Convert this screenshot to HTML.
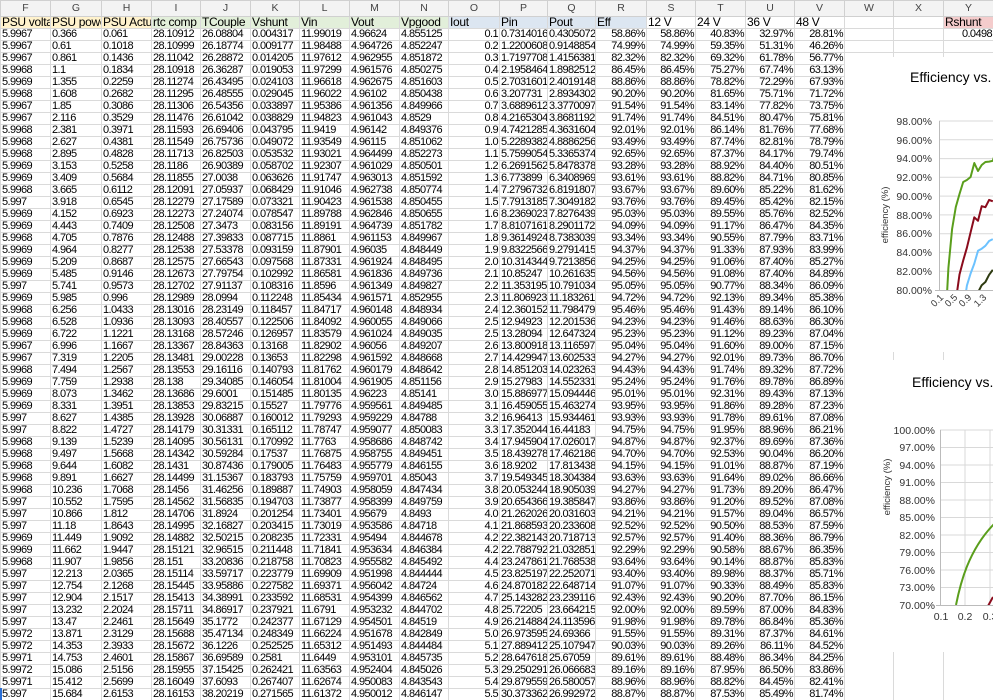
<!DOCTYPE html>
<html><head><meta charset="utf-8">
<style>
html,body{margin:0;padding:0;background:#fff;width:993px;height:700px;overflow:hidden;position:relative}
table{border-collapse:collapse;table-layout:fixed;width:993px;font:11px "Liberation Sans",Arial,sans-serif;color:#000}
td{height:11px;padding:0 1px;border:1px solid #dadada;white-space:nowrap;overflow:hidden;line-height:11px;letter-spacing:-0.6px}
tr.let td{height:15px;background:#f3f3f3;color:#444;text-align:center;border-color:#d0d0d0;font-size:10.5px;letter-spacing:0}
tr.hd td{font-size:12px;letter-spacing:-0.3px}
tbody tr td:nth-child(10),tbody tr td:nth-child(n+13){text-align:right}
tr.let td{text-align:center!important}
tr.hd td{text-align:left!important}
.y{background:#fff2cc}.g{background:#e2efda}.b{background:#dce6f1}.p{background:#f4cccc}
.ov{position:absolute;background:#fff}
svg text{font-family:"Liberation Sans",Arial,sans-serif}
</style></head><body>
<table>
<colgroup><col style="width:50px"><col style="width:51px"><col style="width:50px"><col style="width:49px"><col style="width:50px"><col style="width:49px"><col style="width:50px"><col style="width:50px"><col style="width:49px"><col style="width:51px"><col style="width:48px"><col style="width:48px"><col style="width:51px"><col style="width:49px"><col style="width:50px"><col style="width:49px"><col style="width:50px"><col style="width:49px"><col style="width:50px"><col style="width:50px"></colgroup>
<tbody>
<tr class="let"><td>F</td><td>G</td><td>H</td><td>I</td><td>J</td><td>K</td><td>L</td><td>M</td><td>N</td><td>O</td><td>P</td><td>Q</td><td>R</td><td>S</td><td>T</td><td>U</td><td>V</td><td>W</td><td>X</td><td>Y</td></tr>
<tr class="hd"><td class="y">PSU voltage</td><td class="y">PSU power</td><td class="y">PSU Actual</td><td class="g">rtc comp</td><td class="g">TCouple</td><td class="g">Vshunt</td><td class="g">Vin</td><td class="g">Vout</td><td class="g">Vpgood</td><td class="b">Iout</td><td class="b">Pin</td><td class="b">Pout</td><td class="b">Eff</td><td>12 V</td><td>24 V</td><td>36 V</td><td>48 V</td><td></td><td></td><td class="p">Rshunt</td></tr>
<tr><td>5.9967</td><td>0.366</td><td>0.061</td><td>28.10912</td><td>26.08804</td><td>0.004317</td><td>11.99019</td><td>4.96624</td><td>4.855125</td><td>0.1</td><td>0.7314016</td><td>0.4305072</td><td>58.86%</td><td>58.86%</td><td>40.83%</td><td>32.97%</td><td>28.81%</td><td></td><td></td><td style="text-align:right">0.0498</td></tr>
<tr><td>5.9967</td><td>0.61</td><td>0.1018</td><td>28.10999</td><td>26.18774</td><td>0.009177</td><td>11.98488</td><td>4.964726</td><td>4.852247</td><td>0.2</td><td>1.2200608</td><td>0.9148854</td><td>74.99%</td><td>74.99%</td><td>59.35%</td><td>51.31%</td><td>46.26%</td><td></td><td></td><td></td></tr>
<tr><td>5.9967</td><td>0.861</td><td>0.1436</td><td>28.11042</td><td>26.28872</td><td>0.014205</td><td>11.97612</td><td>4.962955</td><td>4.851872</td><td>0.3</td><td>1.7197708</td><td>1.4156381</td><td>82.32%</td><td>82.32%</td><td>69.32%</td><td>61.78%</td><td>56.77%</td><td></td><td></td><td></td></tr>
<tr><td>5.9968</td><td>1.1</td><td>0.1834</td><td>28.10918</td><td>26.36287</td><td>0.019053</td><td>11.97299</td><td>4.961576</td><td>4.850275</td><td>0.4</td><td>2.1958464</td><td>1.8982512</td><td>86.45%</td><td>86.45%</td><td>75.27%</td><td>67.74%</td><td>63.13%</td><td></td><td></td><td></td></tr>
<tr><td>5.9969</td><td>1.355</td><td>0.2259</td><td>28.11274</td><td>26.43495</td><td>0.024103</td><td>11.96618</td><td>4.962675</td><td>4.851603</td><td>0.5</td><td>2.7031601</td><td>2.4019148</td><td>88.86%</td><td>88.86%</td><td>78.82%</td><td>72.29%</td><td>67.93%</td><td></td><td></td><td></td></tr>
<tr><td>5.9968</td><td>1.608</td><td>0.2682</td><td>28.11295</td><td>26.48555</td><td>0.029045</td><td>11.96022</td><td>4.96102</td><td>4.850438</td><td>0.6</td><td>3.207731</td><td>2.8934302</td><td>90.20%</td><td>90.20%</td><td>81.65%</td><td>75.71%</td><td>71.72%</td><td></td><td></td><td></td></tr>
<tr><td>5.9967</td><td>1.85</td><td>0.3086</td><td>28.11306</td><td>26.54356</td><td>0.033897</td><td>11.95386</td><td>4.961356</td><td>4.849966</td><td>0.7</td><td>3.6889612</td><td>3.3770097</td><td>91.54%</td><td>91.54%</td><td>83.14%</td><td>77.82%</td><td>73.75%</td><td></td><td></td><td></td></tr>
<tr><td>5.9967</td><td>2.116</td><td>0.3529</td><td>28.11476</td><td>26.61042</td><td>0.038829</td><td>11.94823</td><td>4.961043</td><td>4.8529</td><td>0.8</td><td>4.2165304</td><td>3.8681192</td><td>91.74%</td><td>91.74%</td><td>84.51%</td><td>80.47%</td><td>75.81%</td><td></td><td></td><td></td></tr>
<tr><td>5.9968</td><td>2.381</td><td>0.3971</td><td>28.11593</td><td>26.69406</td><td>0.043795</td><td>11.9419</td><td>4.96142</td><td>4.849376</td><td>0.9</td><td>4.7421285</td><td>4.3631604</td><td>92.01%</td><td>92.01%</td><td>86.14%</td><td>81.76%</td><td>77.68%</td><td></td><td></td><td></td></tr>
<tr><td>5.9968</td><td>2.627</td><td>0.4381</td><td>28.11549</td><td>26.75736</td><td>0.049072</td><td>11.93549</td><td>4.96115</td><td>4.851062</td><td>1.0</td><td>5.2289382</td><td>4.8886256</td><td>93.49%</td><td>93.49%</td><td>87.74%</td><td>82.81%</td><td>78.79%</td><td></td><td></td><td></td></tr>
<tr><td>5.9968</td><td>2.895</td><td>0.4828</td><td>28.11713</td><td>26.82503</td><td>0.053532</td><td>11.93021</td><td>4.964499</td><td>4.852273</td><td>1.1</td><td>5.7599054</td><td>5.3365374</td><td>92.65%</td><td>92.65%</td><td>87.37%</td><td>84.17%</td><td>79.74%</td><td></td><td></td><td></td></tr>
<tr><td>5.9969</td><td>3.153</td><td>0.5258</td><td>28.1186</td><td>26.90389</td><td>0.058702</td><td>11.92307</td><td>4.961029</td><td>4.850501</td><td>1.2</td><td>6.2691562</td><td>5.8478378</td><td>93.28%</td><td>93.28%</td><td>88.92%</td><td>84.40%</td><td>80.51%</td><td></td><td></td><td></td></tr>
<tr><td>5.9969</td><td>3.409</td><td>0.5684</td><td>28.11855</td><td>27.0038</td><td>0.063626</td><td>11.91747</td><td>4.963013</td><td>4.851592</td><td>1.3</td><td>6.773899</td><td>6.3408969</td><td>93.61%</td><td>93.61%</td><td>88.82%</td><td>84.71%</td><td>80.85%</td><td></td><td></td><td></td></tr>
<tr><td>5.9968</td><td>3.665</td><td>0.6112</td><td>28.12091</td><td>27.05937</td><td>0.068429</td><td>11.91046</td><td>4.962738</td><td>4.850774</td><td>1.4</td><td>7.2796732</td><td>6.8191807</td><td>93.67%</td><td>93.67%</td><td>89.60%</td><td>85.22%</td><td>81.62%</td><td></td><td></td><td></td></tr>
<tr><td>5.997</td><td>3.918</td><td>0.6545</td><td>28.12279</td><td>27.17589</td><td>0.073321</td><td>11.90423</td><td>4.961538</td><td>4.850455</td><td>1.5</td><td>7.7913185</td><td>7.3049182</td><td>93.76%</td><td>93.76%</td><td>89.45%</td><td>85.42%</td><td>82.15%</td><td></td><td></td><td></td></tr>
<tr><td>5.9969</td><td>4.152</td><td>0.6923</td><td>28.12273</td><td>27.24074</td><td>0.078547</td><td>11.89788</td><td>4.962846</td><td>4.850655</td><td>1.6</td><td>8.2369023</td><td>7.8276439</td><td>95.03%</td><td>95.03%</td><td>89.55%</td><td>85.76%</td><td>82.52%</td><td></td><td></td><td></td></tr>
<tr><td>5.9969</td><td>4.443</td><td>0.7409</td><td>28.12508</td><td>27.3473</td><td>0.083156</td><td>11.89191</td><td>4.964739</td><td>4.851782</td><td>1.7</td><td>8.8107161</td><td>8.2901172</td><td>94.09%</td><td>94.09%</td><td>91.17%</td><td>86.47%</td><td>84.35%</td><td></td><td></td><td></td></tr>
<tr><td>5.9968</td><td>4.705</td><td>0.7876</td><td>28.12488</td><td>27.39833</td><td>0.087715</td><td>11.8861</td><td>4.961153</td><td>4.849967</td><td>1.8</td><td>9.3614924</td><td>8.7383039</td><td>93.34%</td><td>93.34%</td><td>90.55%</td><td>87.79%</td><td>83.71%</td><td></td><td></td><td></td></tr>
<tr><td>5.9969</td><td>4.964</td><td>0.8277</td><td>28.12538</td><td>27.53378</td><td>0.093159</td><td>11.87901</td><td>4.96035</td><td>4.848449</td><td>1.9</td><td>9.8322566</td><td>9.2791415</td><td>94.37%</td><td>94.37%</td><td>91.33%</td><td>87.93%</td><td>83.99%</td><td></td><td></td><td></td></tr>
<tr><td>5.9969</td><td>5.209</td><td>0.8687</td><td>28.12575</td><td>27.66543</td><td>0.097568</td><td>11.87331</td><td>4.961924</td><td>4.848495</td><td>2.0</td><td>10.314344</td><td>9.7213856</td><td>94.25%</td><td>94.25%</td><td>91.06%</td><td>87.40%</td><td>85.27%</td><td></td><td></td><td></td></tr>
<tr><td>5.9969</td><td>5.485</td><td>0.9146</td><td>28.12673</td><td>27.79754</td><td>0.102992</td><td>11.86581</td><td>4.961836</td><td>4.849736</td><td>2.1</td><td>10.85247</td><td>10.261635</td><td>94.56%</td><td>94.56%</td><td>91.08%</td><td>87.40%</td><td>84.89%</td><td></td><td></td><td></td></tr>
<tr><td>5.997</td><td>5.741</td><td>0.9573</td><td>28.12702</td><td>27.91137</td><td>0.108316</td><td>11.8596</td><td>4.961349</td><td>4.849827</td><td>2.2</td><td>11.353195</td><td>10.791034</td><td>95.05%</td><td>95.05%</td><td>90.77%</td><td>88.34%</td><td>86.09%</td><td></td><td></td><td></td></tr>
<tr><td>5.9969</td><td>5.985</td><td>0.996</td><td>28.12989</td><td>28.0994</td><td>0.112248</td><td>11.85434</td><td>4.961571</td><td>4.852955</td><td>2.3</td><td>11.806923</td><td>11.183261</td><td>94.72%</td><td>94.72%</td><td>92.13%</td><td>89.34%</td><td>85.38%</td><td></td><td></td><td></td></tr>
<tr><td>5.9968</td><td>6.256</td><td>1.0433</td><td>28.13016</td><td>28.23149</td><td>0.118457</td><td>11.84717</td><td>4.960148</td><td>4.848934</td><td>2.4</td><td>12.360152</td><td>11.798479</td><td>95.46%</td><td>95.46%</td><td>91.43%</td><td>89.14%</td><td>86.10%</td><td></td><td></td><td></td></tr>
<tr><td>5.9968</td><td>6.528</td><td>1.0936</td><td>28.13093</td><td>28.40557</td><td>0.122506</td><td>11.84092</td><td>4.960055</td><td>4.849066</td><td>2.5</td><td>12.94923</td><td>12.201536</td><td>94.23%</td><td>94.23%</td><td>91.46%</td><td>88.63%</td><td>86.30%</td><td></td><td></td><td></td></tr>
<tr><td>5.9969</td><td>6.722</td><td>1.1221</td><td>28.13168</td><td>28.57246</td><td>0.126957</td><td>11.83579</td><td>4.961024</td><td>4.849035</td><td>2.5</td><td>13.28094</td><td>12.647324</td><td>95.23%</td><td>95.23%</td><td>91.12%</td><td>89.23%</td><td>87.04%</td><td></td><td></td><td></td></tr>
<tr><td>5.9967</td><td>6.996</td><td>1.1667</td><td>28.13367</td><td>28.84363</td><td>0.13168</td><td>11.82902</td><td>4.96056</td><td>4.849207</td><td>2.6</td><td>13.800918</td><td>13.116597</td><td>95.04%</td><td>95.04%</td><td>91.60%</td><td>89.00%</td><td>87.15%</td><td></td><td></td><td></td></tr>
<tr><td>5.9967</td><td>7.319</td><td>1.2205</td><td>28.13481</td><td>29.00228</td><td>0.13653</td><td>11.82298</td><td>4.961592</td><td>4.848668</td><td>2.7</td><td>14.429947</td><td>13.602533</td><td>94.27%</td><td>94.27%</td><td>92.01%</td><td>89.73%</td><td>86.70%</td><td></td><td></td><td></td></tr>
<tr><td>5.9968</td><td>7.494</td><td>1.2567</td><td>28.13553</td><td>29.16116</td><td>0.140793</td><td>11.81762</td><td>4.960179</td><td>4.848642</td><td>2.8</td><td>14.851203</td><td>14.023263</td><td>94.43%</td><td>94.43%</td><td>91.74%</td><td>89.32%</td><td>87.72%</td><td></td><td></td><td></td></tr>
<tr><td>5.9969</td><td>7.759</td><td>1.2938</td><td>28.138</td><td>29.34085</td><td>0.146054</td><td>11.81004</td><td>4.961905</td><td>4.851156</td><td>2.9</td><td>15.27983</td><td>14.552331</td><td>95.24%</td><td>95.24%</td><td>91.76%</td><td>89.78%</td><td>86.89%</td><td></td><td></td><td></td></tr>
<tr><td>5.9969</td><td>8.073</td><td>1.3462</td><td>28.13686</td><td>29.6001</td><td>0.151485</td><td>11.80135</td><td>4.96223</td><td>4.85141</td><td>3.0</td><td>15.886977</td><td>15.094446</td><td>95.01%</td><td>95.01%</td><td>92.31%</td><td>89.43%</td><td>87.13%</td><td></td><td></td><td></td></tr>
<tr><td>5.9969</td><td>8.331</td><td>1.3951</td><td>28.13853</td><td>29.83215</td><td>0.15527</td><td>11.79776</td><td>4.959561</td><td>4.849485</td><td>3.1</td><td>16.459055</td><td>15.463274</td><td>93.95%</td><td>93.95%</td><td>91.86%</td><td>89.28%</td><td>87.23%</td><td></td><td></td><td></td></tr>
<tr><td>5.997</td><td>8.627</td><td>1.4385</td><td>28.13928</td><td>30.06887</td><td>0.160012</td><td>11.79293</td><td>4.959229</td><td>4.84788</td><td>3.2</td><td>16.96413</td><td>15.934461</td><td>93.93%</td><td>93.93%</td><td>91.78%</td><td>89.61%</td><td>87.08%</td><td></td><td></td><td></td></tr>
<tr><td>5.997</td><td>8.822</td><td>1.4727</td><td>28.14179</td><td>30.31331</td><td>0.165112</td><td>11.78747</td><td>4.959077</td><td>4.850083</td><td>3.3</td><td>17.352044</td><td>16.44183</td><td>94.75%</td><td>94.75%</td><td>91.95%</td><td>88.96%</td><td>86.21%</td><td></td><td></td><td></td></tr>
<tr><td>5.9968</td><td>9.139</td><td>1.5239</td><td>28.14095</td><td>30.56131</td><td>0.170992</td><td>11.7763</td><td>4.958686</td><td>4.848742</td><td>3.4</td><td>17.945904</td><td>17.026017</td><td>94.87%</td><td>94.87%</td><td>92.37%</td><td>89.69%</td><td>87.36%</td><td></td><td></td><td></td></tr>
<tr><td>5.9968</td><td>9.497</td><td>1.5668</td><td>28.14342</td><td>30.59284</td><td>0.17537</td><td>11.76875</td><td>4.958755</td><td>4.849451</td><td>3.5</td><td>18.439278</td><td>17.462186</td><td>94.70%</td><td>94.70%</td><td>92.53%</td><td>90.04%</td><td>86.20%</td><td></td><td></td><td></td></tr>
<tr><td>5.9968</td><td>9.644</td><td>1.6082</td><td>28.1431</td><td>30.87436</td><td>0.179005</td><td>11.76483</td><td>4.955779</td><td>4.846155</td><td>3.6</td><td>18.9202</td><td>17.813438</td><td>94.15%</td><td>94.15%</td><td>91.01%</td><td>88.87%</td><td>87.19%</td><td></td><td></td><td></td></tr>
<tr><td>5.9968</td><td>9.891</td><td>1.6627</td><td>28.14499</td><td>31.15367</td><td>0.183793</td><td>11.75759</td><td>4.959701</td><td>4.85043</td><td>3.7</td><td>19.549345</td><td>18.304384</td><td>93.63%</td><td>93.63%</td><td>91.64%</td><td>89.02%</td><td>86.66%</td><td></td><td></td><td></td></tr>
<tr><td>5.9968</td><td>10.236</td><td>1.7068</td><td>28.1456</td><td>31.46256</td><td>0.189887</td><td>11.74903</td><td>4.958059</td><td>4.847434</td><td>3.8</td><td>20.053244</td><td>18.905039</td><td>94.27%</td><td>94.27%</td><td>91.73%</td><td>89.20%</td><td>86.47%</td><td></td><td></td><td></td></tr>
<tr><td>5.997</td><td>10.552</td><td>1.7595</td><td>28.14562</td><td>31.56835</td><td>0.194703</td><td>11.73877</td><td>4.958399</td><td>4.849759</td><td>3.9</td><td>20.654366</td><td>19.385847</td><td>93.86%</td><td>93.86%</td><td>91.20%</td><td>89.52%</td><td>87.08%</td><td></td><td></td><td></td></tr>
<tr><td>5.997</td><td>10.866</td><td>1.812</td><td>28.14706</td><td>31.8924</td><td>0.201254</td><td>11.73401</td><td>4.95679</td><td>4.8493</td><td>4.0</td><td>21.262026</td><td>20.031603</td><td>94.21%</td><td>94.21%</td><td>91.57%</td><td>89.04%</td><td>86.57%</td><td></td><td></td><td></td></tr>
<tr><td>5.997</td><td>11.18</td><td>1.8643</td><td>28.14995</td><td>32.16827</td><td>0.203415</td><td>11.73019</td><td>4.953586</td><td>4.84718</td><td>4.1</td><td>21.868593</td><td>20.233608</td><td>92.52%</td><td>92.52%</td><td>90.50%</td><td>88.53%</td><td>87.59%</td><td></td><td></td><td></td></tr>
<tr><td>5.9969</td><td>11.449</td><td>1.9092</td><td>28.14882</td><td>32.50215</td><td>0.208235</td><td>11.72331</td><td>4.95494</td><td>4.844678</td><td>4.2</td><td>22.382143</td><td>20.718713</td><td>92.57%</td><td>92.57%</td><td>91.40%</td><td>88.36%</td><td>86.79%</td><td></td><td></td><td></td></tr>
<tr><td>5.9969</td><td>11.662</td><td>1.9447</td><td>28.15121</td><td>32.96515</td><td>0.211448</td><td>11.71841</td><td>4.953634</td><td>4.846384</td><td>4.2</td><td>22.788792</td><td>21.032851</td><td>92.29%</td><td>92.29%</td><td>90.58%</td><td>88.67%</td><td>86.35%</td><td></td><td></td><td></td></tr>
<tr><td>5.9968</td><td>11.907</td><td>1.9856</td><td>28.151</td><td>33.20836</td><td>0.218758</td><td>11.70823</td><td>4.955582</td><td>4.845492</td><td>4.4</td><td>23.247861</td><td>21.768538</td><td>93.64%</td><td>93.64%</td><td>90.14%</td><td>88.87%</td><td>85.83%</td><td></td><td></td><td></td></tr>
<tr><td>5.997</td><td>12.213</td><td>2.0365</td><td>28.15114</td><td>33.59717</td><td>0.223779</td><td>11.69909</td><td>4.951998</td><td>4.844444</td><td>4.5</td><td>23.825197</td><td>22.252071</td><td>93.40%</td><td>93.40%</td><td>89.98%</td><td>88.37%</td><td>85.71%</td><td></td><td></td><td></td></tr>
<tr><td>5.997</td><td>12.754</td><td>2.1268</td><td>28.15445</td><td>33.95886</td><td>0.227582</td><td>11.69371</td><td>4.956042</td><td>4.84724</td><td>4.6</td><td>24.870182</td><td>22.648714</td><td>91.07%</td><td>91.07%</td><td>90.33%</td><td>88.49%</td><td>85.83%</td><td></td><td></td><td></td></tr>
<tr><td>5.997</td><td>12.904</td><td>2.1517</td><td>28.15413</td><td>34.38991</td><td>0.233592</td><td>11.68531</td><td>4.954399</td><td>4.846562</td><td>4.7</td><td>25.143282</td><td>23.239116</td><td>92.43%</td><td>92.43%</td><td>90.20%</td><td>87.70%</td><td>86.15%</td><td></td><td></td><td></td></tr>
<tr><td>5.997</td><td>13.232</td><td>2.2024</td><td>28.15711</td><td>34.86917</td><td>0.237921</td><td>11.6791</td><td>4.953232</td><td>4.844702</td><td>4.8</td><td>25.72205</td><td>23.664215</td><td>92.00%</td><td>92.00%</td><td>89.59%</td><td>87.00%</td><td>84.83%</td><td></td><td></td><td></td></tr>
<tr><td>5.997</td><td>13.47</td><td>2.2461</td><td>28.15649</td><td>35.1772</td><td>0.242377</td><td>11.67129</td><td>4.954501</td><td>4.84519</td><td>4.9</td><td>26.214884</td><td>24.113596</td><td>91.98%</td><td>91.98%</td><td>89.78%</td><td>86.84%</td><td>85.36%</td><td></td><td></td><td></td></tr>
<tr><td>5.9972</td><td>13.871</td><td>2.3129</td><td>28.15688</td><td>35.47134</td><td>0.248349</td><td>11.66224</td><td>4.951678</td><td>4.842849</td><td>5.0</td><td>26.973595</td><td>24.69366</td><td>91.55%</td><td>91.55%</td><td>89.31%</td><td>87.37%</td><td>84.61%</td><td></td><td></td><td></td></tr>
<tr><td>5.9972</td><td>14.353</td><td>2.3933</td><td>28.15672</td><td>36.1226</td><td>0.252525</td><td>11.65312</td><td>4.951493</td><td>4.844484</td><td>5.1</td><td>27.889412</td><td>25.107947</td><td>90.03%</td><td>90.03%</td><td>89.26%</td><td>86.11%</td><td>84.52%</td><td></td><td></td><td></td></tr>
<tr><td>5.9971</td><td>14.753</td><td>2.4601</td><td>28.15867</td><td>36.69589</td><td>0.2581</td><td>11.6449</td><td>4.953101</td><td>4.845735</td><td>5.2</td><td>28.647618</td><td>25.67059</td><td>89.61%</td><td>89.61%</td><td>88.48%</td><td>86.34%</td><td>84.25%</td><td></td><td></td><td></td></tr>
<tr><td>5.9972</td><td>15.086</td><td>2.5156</td><td>28.15955</td><td>37.15425</td><td>0.262421</td><td>11.63563</td><td>4.952404</td><td>4.845026</td><td>5.3</td><td>29.250291</td><td>26.066683</td><td>89.16%</td><td>89.16%</td><td>87.95%</td><td>86.50%</td><td>83.86%</td><td></td><td></td><td></td></tr>
<tr><td>5.9971</td><td>15.412</td><td>2.5699</td><td>28.16049</td><td>37.6093</td><td>0.267407</td><td>11.62674</td><td>4.950083</td><td>4.843543</td><td>5.4</td><td>29.879559</td><td>26.580057</td><td>88.96%</td><td>88.96%</td><td>88.82%</td><td>84.45%</td><td>82.41%</td><td></td><td></td><td></td></tr>
<tr><td>5.997</td><td>15.684</td><td>2.6153</td><td>28.16153</td><td>38.20219</td><td>0.271565</td><td>11.61372</td><td>4.950012</td><td>4.846147</td><td>5.5</td><td>30.373362</td><td>26.992972</td><td>88.87%</td><td>88.87%</td><td>87.53%</td><td>85.49%</td><td>81.74%</td><td></td><td></td><td></td></tr>
</tbody></table>

<div class="ov" style="left:845px;top:57px;width:148px;height:643px;background:#fff">
  <div style="position:absolute;left:48px;top:0;width:1px;height:643px;background:#dadada"></div>
  <div style="position:absolute;left:98px;top:0;width:1px;height:643px;background:#dadada"></div>
</div>

<svg style="position:absolute;left:0;top:0" width="993" height="700" viewBox="0 0 993 700">
  <defs>
    <clipPath id="c1"><rect x="940" y="100" width="53" height="190"/></clipPath>
    <clipPath id="c2"><rect x="941" y="420" width="52" height="185"/></clipPath>
  </defs>
  <rect x="865" y="57" width="128" height="295" fill="#fff"/>
  <text x="910" y="82" font-size="14" fill="#000">Efficiency vs. Current</text>
  <g stroke="#d9d9d9" stroke-width="1">
    <line x1="939" y1="121" x2="993" y2="121"/><line x1="939" y1="139.8" x2="993" y2="139.8"/>
    <line x1="939" y1="158.6" x2="993" y2="158.6"/><line x1="939" y1="177.3" x2="993" y2="177.3"/>
    <line x1="939" y1="196.1" x2="993" y2="196.1"/><line x1="939" y1="214.9" x2="993" y2="214.9"/>
    <line x1="939" y1="233.7" x2="993" y2="233.7"/><line x1="939" y1="252.4" x2="993" y2="252.4"/>
    <line x1="939" y1="271.2" x2="993" y2="271.2"/>
  </g>
  <line x1="939.5" y1="121" x2="939.5" y2="290" stroke="#bbb"/>
  <line x1="935" y1="290.5" x2="993" y2="290.5" stroke="#bbb"/>
  <g font-size="10.5" fill="#333" text-anchor="end">
    <text x="932" y="125">98.00%</text><text x="932" y="144">96.00%</text><text x="932" y="162">94.00%</text>
    <text x="932" y="181">92.00%</text><text x="932" y="200">90.00%</text><text x="932" y="219">88.00%</text>
    <text x="932" y="237">86.00%</text><text x="932" y="256">84.00%</text><text x="932" y="275">82.00%</text>
    <text x="932" y="294">80.00%</text>
  </g>
  <text transform="translate(888,215) rotate(-90)" font-size="9.5" fill="#333" text-anchor="middle">efficiency (%)</text>
  <g font-size="9.5" fill="#333" text-anchor="end">
    <text transform="translate(944,298) rotate(-45)">0.1</text>
    <text transform="translate(958,298) rotate(-45)">0.5</text>
    <text transform="translate(972,298) rotate(-45)">0.9</text>
    <text transform="translate(987,298) rotate(-45)">1.3</text>
  </g>
  <g clip-path="url(#c1)" fill="none" stroke-width="2" stroke-linejoin="round">
    <polyline stroke="#5a9e1c" points="944.7,337 948.4,268 952.1,229 955.8,207 959.5,194 963.2,182 966.9,180 970.6,177 974.3,163 978,171 981.7,165 985.4,162 989.1,161.6 992.8,160.8 996.5,149"/>
    <polyline stroke="#8a0b1c" points="952.1,334 955.8,301 959.5,274.5 963.2,260.5 966.9,247.7 970.6,232.3 974.3,217.3 978,220.8 981.7,206.2 985.4,207.2 989.1,199.9 992.8,201.3"/>
    <polyline stroke="#6cc2ff" points="963.2,310.5 966.9,285.6 970.6,273.5 974.3,263.6 978,250.8 981.7,248.7 985.4,245.8 989.1,241 992.8,239.1"/>
    <polyline stroke="#2d3a10" points="974.3,301.4 978,292.4 981.7,285.2 985.4,282 989.1,274.8 992.8,269.8"/>
  </g>
  <rect x="845" y="360" width="148" height="292" fill="#fff"/>
  <text x="912" y="387" font-size="14" fill="#000">Efficiency vs. Current</text>
  <g stroke="#d9d9d9" stroke-width="1">
    <line x1="940" y1="430" x2="993" y2="430"/><line x1="940" y1="447.5" x2="993" y2="447.5"/>
    <line x1="940" y1="465" x2="993" y2="465"/><line x1="940" y1="482.5" x2="993" y2="482.5"/>
    <line x1="940" y1="500" x2="993" y2="500"/><line x1="940" y1="517.5" x2="993" y2="517.5"/>
    <line x1="940" y1="535" x2="993" y2="535"/><line x1="940" y1="552.5" x2="993" y2="552.5"/>
    <line x1="940" y1="570" x2="993" y2="570"/><line x1="940" y1="587.5" x2="993" y2="587.5"/>
    <line x1="965" y1="430" x2="965" y2="605"/><line x1="990" y1="430" x2="990" y2="605"/>
  </g>
  <line x1="940.5" y1="430" x2="940.5" y2="605" stroke="#bbb"/>
  <line x1="936" y1="605.5" x2="993" y2="605.5" stroke="#bbb"/>
  <g font-size="10.5" fill="#333" text-anchor="end">
    <text x="935" y="434">100.00%</text><text x="935" y="451">97.00%</text><text x="935" y="469">94.00%</text>
    <text x="935" y="486">91.00%</text><text x="935" y="504">88.00%</text><text x="935" y="521">85.00%</text>
    <text x="935" y="539">82.00%</text><text x="935" y="556">79.00%</text><text x="935" y="574">76.00%</text>
    <text x="935" y="591">73.00%</text><text x="935" y="609">70.00%</text>
  </g>
  <text transform="translate(890,487) rotate(-90)" font-size="9.5" fill="#333" text-anchor="middle">efficiency (%)</text>
  <g font-size="10.5" fill="#333" text-anchor="middle">
    <text x="941" y="620">0.1</text><text x="965" y="620">0.2</text><text x="990" y="620">0.3</text>
  </g>
  <g clip-path="url(#c2)" fill="none" stroke-width="2">
    <path stroke="#5a9e1c" d="M956,605 C960,585 968,550 995,523"/>
    <path stroke="#8a0b1c" d="M988,606 L993,597"/>
  </g>
  <rect x="0" y="688" width="2" height="12" fill="#2a6fd6"/>
</svg>
</body></html>
